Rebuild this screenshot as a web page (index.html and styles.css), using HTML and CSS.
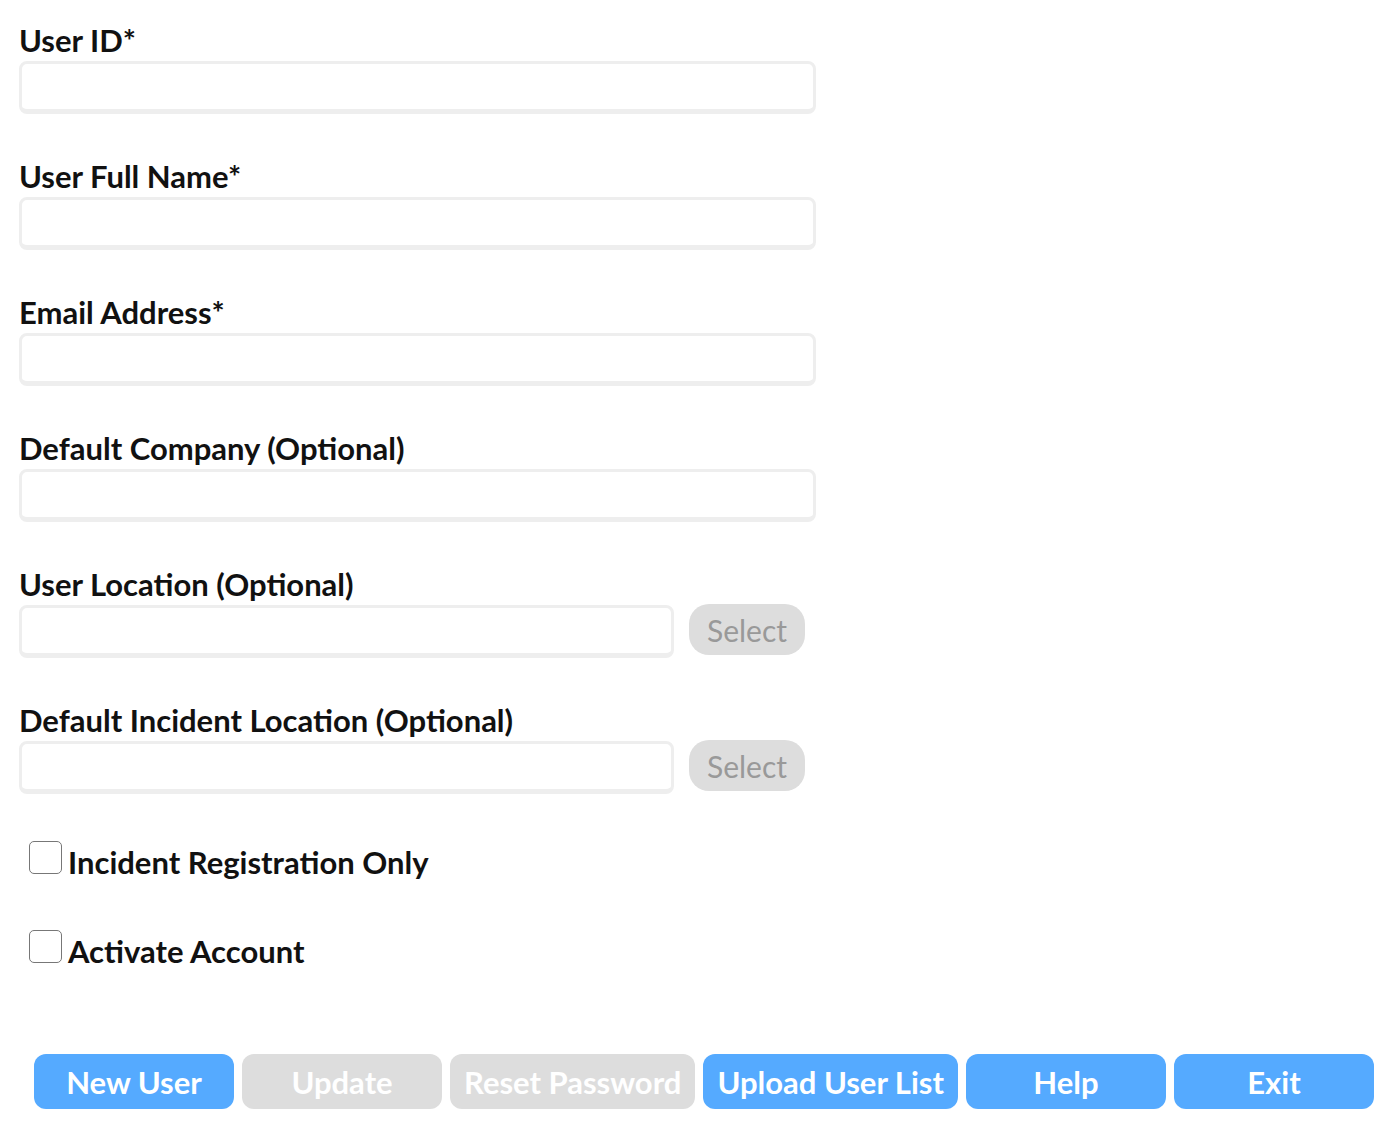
FILE: index.html
```html
<!DOCTYPE html>
<html lang="en">
<head>
<meta charset="utf-8">
<title>User</title>
<link rel="stylesheet" href="styles.css">
</head>
<body>
<form class="form">
  <div class="field">
    <label class="label">User ID*</label>
    <input class="input" type="text">
  </div>
  <div class="field">
    <label class="label">User Full Name*</label>
    <input class="input" type="text">
  </div>
  <div class="field">
    <label class="label">Email Address*</label>
    <input class="input" type="text">
  </div>
  <div class="field">
    <label class="label">Default Company (Optional)</label>
    <input class="input" type="text">
  </div>
  <div class="field">
    <label class="label">User Location (Optional)</label>
    <div class="row">
      <input class="input input-short" type="text">
      <button type="button" class="select-btn">Select</button>
    </div>
  </div>
  <div class="field field-last">
    <label class="label">Default Incident Location (Optional)</label>
    <div class="row">
      <input class="input input-short" type="text">
      <button type="button" class="select-btn">Select</button>
    </div>
  </div>
  <label class="check-row"><span class="box"></span><span class="check-text">Incident Registration Only</span></label>
  <label class="check-row"><span class="box"></span><span class="check-text">Activate Account</span></label>
  <div class="actions">
    <button type="button" class="btn btn-blue">New User</button>
    <button type="button" class="btn btn-grey">Update</button>
    <button type="button" class="btn btn-grey">Reset Password</button>
    <button type="button" class="btn btn-blue">Upload User List</button>
    <button type="button" class="btn btn-blue">Help</button>
    <button type="button" class="btn btn-blue">Exit</button>
  </div>
</form>
</body>
</html>
```
FILE: styles.css
```css
html, body {
  margin: 0;
  padding: 0;
  background: #ffffff;
}
body {
  font-family: "Lato", "Open Sans", "Noto Sans", sans-serif;
  color: #111111;
}
.form {
  padding: 22px 0 0 19px;
  display: flex;
  flex-direction: column;
}
.field {
  display: flex;
  flex-direction: column;
  margin-bottom: 44px;
}
.field-last {
  margin-bottom: 46px;
}
.label {
  font-size: 31px;
  font-weight: 700;
  line-height: 36px;
  height: 36px;
  margin-bottom: 3px;
  color: #111;
  white-space: nowrap;
}
.input {
  box-sizing: border-box;
  width: 797px;
  height: 53px;
  margin: 0;
  border: 3px solid #eeeeee;
  border-bottom-width: 5px;
  border-radius: 8px;
  background: #fff;
  outline: none;
  font: inherit;
}
.row {
  display: flex;
  align-items: flex-start;
  gap: 15px;
}
.input-short {
  width: 655px;
}
.select-btn {
  box-sizing: border-box;
  width: 116px;
  height: 51px;
  margin-top: -1px;
  border: none;
  border-radius: 20px;
  background: #dddddd;
  color: #999999;
  font-family: "Lato", "Open Sans", sans-serif;
  font-size: 30px;
  font-weight: 400;
  padding: 0;
}
.check-row {
  display: flex;
  align-items: center;
  height: 34px;
  margin-left: 10px;
  margin-bottom: 55px;
}
.box {
  box-sizing: border-box;
  width: 33px;
  height: 33px;
  border: 1.5px solid #777777;
  border-radius: 5px;
  background: #fff;
  flex: none;
}
.check-text {
  margin-left: 6px;
  font-size: 31px;
  font-weight: 700;
  margin-top: 10px;
  white-space: nowrap;
}
.actions {
  display: flex;
  gap: 8px;
  margin-top: 36px;
  margin-left: 15px;
}
.btn {
  box-sizing: border-box;
  min-width: 200px;
  height: 55px;
  padding: 0 14px;
  border: none;
  border-radius: 12px;
  color: #ffffff;
  font-family: "Lato", "Open Sans", sans-serif;
  font-size: 31px;
  font-weight: 700;
  white-space: nowrap;
}
.btn-blue {
  background: #55aaff;
}
.btn-grey {
  background: #dddddd;
}
```
